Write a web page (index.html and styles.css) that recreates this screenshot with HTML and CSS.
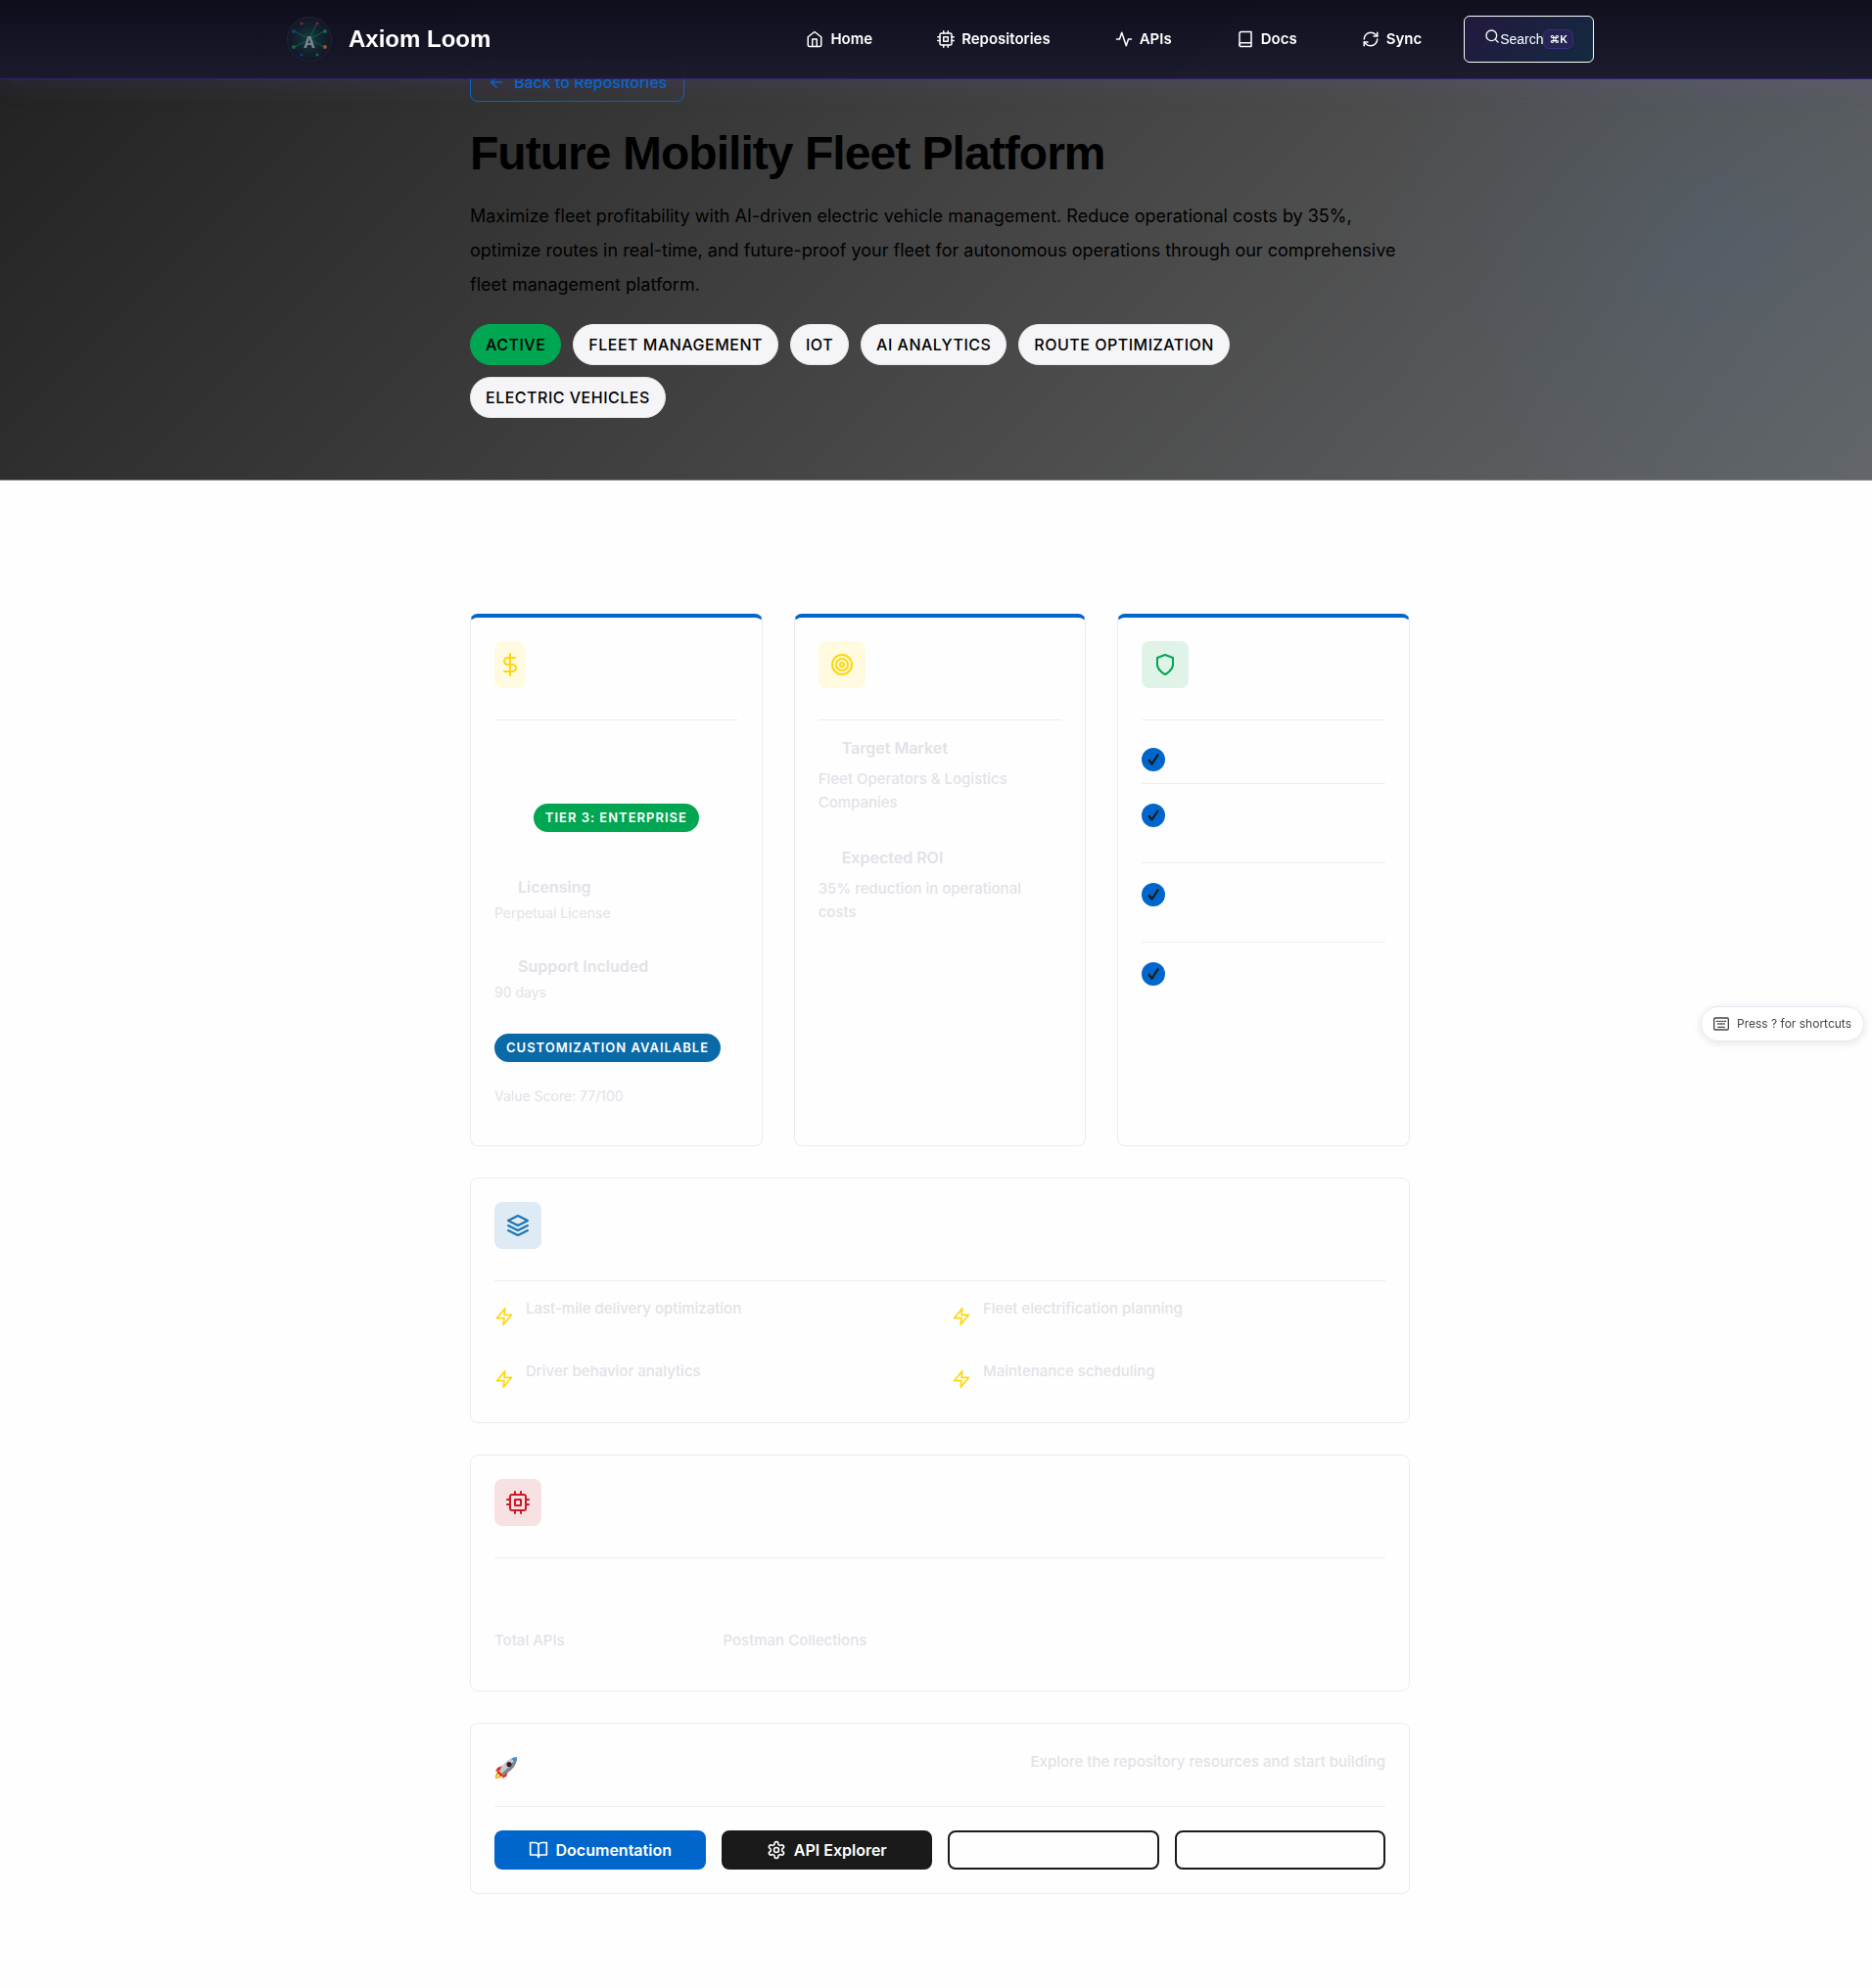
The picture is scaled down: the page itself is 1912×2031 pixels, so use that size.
FILE: index.html
```html
<!DOCTYPE html>
<html lang="en">
<head>
<meta charset="utf-8">
<title>Future Mobility Fleet Platform - Axiom Loom</title>
<link rel="stylesheet" href="styles.css">
</head>
<body>
<svg class="sprite" aria-hidden="true">
  <symbol id="cpu" viewBox="0 0 24 24"><rect x="4" y="4" width="16" height="16" rx="2"/><rect x="9" y="9" width="6" height="6"/><path d="M9 1v3M15 1v3M9 20v3M15 20v3M20 9h3M20 14h3M1 9h3M1 14h3"/></symbol>
  <symbol id="zap" viewBox="0 0 24 24"><path d="M13 2 3 14h9l-1 8 10-12h-9z"/></symbol>
  <symbol id="tick" viewBox="0 0 24 24"><path d="M6 13l4 5 8-12"/></symbol>
</svg>
<header class="topbar">
  <div class="topbar-inner">
    <a class="brand" href="#">
      <svg class="brand-mark" viewBox="0 0 48 48" aria-hidden="true">
        <defs><radialGradient id="glow"><stop offset="0" stop-color="#15403f"/><stop offset=".6" stop-color="#12222f"/><stop offset="1" stop-color="#141625"/></radialGradient></defs>
        <circle cx="24" cy="24" r="22.500" fill="url(#glow)" stroke="#24243a" stroke-width="1"/>
        <path d="M24 24 9 16M24 24 9 32M24 24l7-15M24 24l15-8M24 24l15 8" stroke="#0d5f4b" stroke-width="1"/>
        <g stroke="none">
          <circle cx="8" cy="16" r="2" fill="#123f7c"/><circle cx="40" cy="16" r="2" fill="#0f6a4d"/><circle cx="8" cy="32" r="2" fill="#0f6a4d"/><circle cx="40" cy="32" r="2" fill="#a0521f"/>
          <circle cx="16" cy="8" r="1.500" fill="#7a2345"/><circle cx="32" cy="8" r="1.500" fill="#7a2345"/><circle cx="16" cy="40" r="1.500" fill="#123f7c"/><circle cx="32" cy="40" r="1.500" fill="#0f6a4d"/>
        </g>
        <text x="24" y="33" text-anchor="middle" class="brand-letter">A</text>
      </svg>
      <span class="brand-name">Axiom Loom</span>
    </a>
    <nav class="nav">
      <a href="#"><svg class="i18" viewBox="0 0 24 24"><path d="M3 9l9-7 9 7v11a2 2 0 0 1-2 2H5a2 2 0 0 1-2-2z"/><path d="M9 22V12h6v10"/></svg>Home</a>
      <a href="#"><svg class="i18"><use href="#cpu"/></svg>Repositories</a>
      <a href="#"><svg class="i18" viewBox="0 0 24 24"><path d="M22 12h-4l-3 9L9 3l-3 9H2"/></svg>APIs</a>
      <a href="#"><svg class="i18" viewBox="0 0 24 24"><path d="M4 19.500A2.500 2.500 0 0 1 6.500 17H20"/><path d="M6.500 2H20v20H6.500A2.500 2.500 0 0 1 4 19.500v-15A2.500 2.500 0 0 1 6.500 2z"/></svg>Docs</a>
      <a href="#"><svg class="i18" viewBox="0 0 24 24"><path d="M21 3v5h-5M3 21v-5h5"/><path d="M3 12a9 9 0 0 1 9-9 9.750 9.750 0 0 1 6.740 2.740L21 8M21 12a9 9 0 0 1-9 9 9.750 9.750 0 0 1-6.740-2.740L3 16"/></svg>Sync</a>
      <button class="search" type="button"><svg class="i16" viewBox="0 0 24 24"><circle cx="11" cy="11" r="8"/><path d="M21 21l-4.350-4.350"/></svg>Search<kbd>⌘K</kbd></button>
    </nav>
  </div>
</header>

<section class="hero">
  <div class="wrap">
    <a class="back" href="#"><svg class="i18" viewBox="0 0 24 24"><path d="M19 12H5M12 19l-7-7 7-7"/></svg>Back to Repositories</a>
    <h1>Future Mobility Fleet Platform</h1>
    <p class="lead">Maximize fleet profitability with AI-driven electric vehicle management. Reduce operational costs by 35%, optimize routes in real-time, and future-proof your fleet for autonomous operations through our comprehensive fleet management platform.</p>
    <ul class="tags">
      <li class="active">Active</li><li>Fleet Management</li><li>IoT</li><li>AI Analytics</li><li>Route Optimization</li><li>Electric Vehicles</li>
    </ul>
  </div>
</section>

<main class="main">
  <div class="wrap stack">
    <div class="trio">
      <section class="card accent">
        <div class="card-head"><span class="tile yellow narrow"><svg class="i24" viewBox="0 0 24 24"><path d="M12 1v22M17 5H9.500a3.500 3.500 0 0 0 0 7h5a3.500 3.500 0 0 1 0 7H6"/></svg></span></div>
        <div class="price"><span class="badge green">Tier 3: Enterprise</span></div>
        <dl class="facts">
          <dt>Licensing</dt><dd>Perpetual License</dd>
          <dt>Support Included</dt><dd>90 days</dd>
        </dl>
        <span class="badge blue">Customization Available</span>
        <p class="score">Value Score: 77/100</p>
      </section>
      <section class="card accent">
        <div class="card-head"><span class="tile yellow"><svg class="i24" viewBox="0 0 24 24"><circle cx="12" cy="12" r="10"/><circle cx="12" cy="12" r="6"/><circle cx="12" cy="12" r="2"/></svg></span></div>
        <dl class="facts roomy">
          <dt>Target Market</dt><dd>Fleet Operators &amp; Logistics Companies</dd>
          <dt>Expected ROI</dt><dd>35% reduction in operational costs</dd>
        </dl>
      </section>
      <section class="card accent">
        <div class="card-head"><span class="tile mint"><svg class="i24" viewBox="0 0 24 24"><path d="M12 22s8-4 8-10V5l-8-3-8 3v7c0 6 8 10 8 10z"/></svg></span></div>
        <ul class="checks">
          <li><span class="dot"><svg><use href="#tick"/></svg></span></li>
          <li><span class="dot"><svg><use href="#tick"/></svg></span></li>
          <li><span class="dot"><svg><use href="#tick"/></svg></span></li>
          <li><span class="dot"><svg><use href="#tick"/></svg></span></li>
        </ul>
      </section>
    </div>

    <section class="card">
      <div class="card-head"><span class="tile sky"><svg class="i24" viewBox="0 0 24 24"><path d="M12 2 2 7l10 5 10-5zM2 17l10 5 10-5M2 12l10 5 10-5"/></svg></span></div>
      <ul class="uses">
        <li><svg class="i20"><use href="#zap"/></svg>Last-mile delivery optimization</li>
        <li><svg class="i20"><use href="#zap"/></svg>Fleet electrification planning</li>
        <li><svg class="i20"><use href="#zap"/></svg>Driver behavior analytics</li>
        <li><svg class="i20"><use href="#zap"/></svg>Maintenance scheduling</li>
      </ul>
    </section>

    <section class="card">
      <div class="card-head"><span class="tile rose"><svg class="i24"><use href="#cpu"/></svg></span></div>
      <div class="stats"><p>Total APIs</p><p>Postman Collections</p></div>
    </section>

    <section class="card">
      <div class="card-head cta-head">
        <svg class="rocket" viewBox="0 0 24 24" aria-hidden="true">
          <path d="M8 10 3 12 1 16l5-1zM14 16l-2 5-4 2 1-5z" fill="#e0301e"/>
          <path d="M5 15c-3 1-4 4-4 8 4 0 7-2 8-4z" fill="#f7941e"/><path d="M5 17c-2 1-3 3-3 5 2 0 4-1 5-3z" fill="#ffd84a"/>
          <path d="M5 16C8 8 14 2 23 1c0 9-6 15-14 18z" fill="#c3cbd3"/><path d="M7 18C12 14 18 8 23 1c0 9-6 15-14 18z" fill="#7d8791"/>
          <path d="M17 2.500C19 1.500 21 1 23 1c0 2-.5 4-1.500 6z" fill="#4a90cc"/>
          <circle cx="15" cy="8.500" r="2.600" fill="#3a1c20"/><path d="M4 15l5 5-2 1-4-4z" fill="#c3261a"/>
        </svg>
        <p>Explore the repository resources and start building</p>
      </div>
      <div class="actions">
        <button class="btn primary" type="button"><svg class="i20" viewBox="0 0 24 24"><path d="M2 3h6a4 4 0 0 1 4 4v14a3 3 0 0 0-3-3H2zM22 3h-6a4 4 0 0 0-4 4v14a3 3 0 0 1 3-3h7z"/></svg>Documentation</button>
        <button class="btn dark" type="button"><svg class="i20" viewBox="0 0 24 24"><circle cx="12" cy="12" r="3"/><path d="M12.220 2h-.440a2 2 0 0 0-2 2v.180a2 2 0 0 1-1 1.730l-.430.250a2 2 0 0 1-2 0l-.150-.080a2 2 0 0 0-2.730.730l-.220.380a2 2 0 0 0 .730 2.730l.150.100a2 2 0 0 1 1 1.720v.510a2 2 0 0 1-1 1.740l-.150.090a2 2 0 0 0-.730 2.730l.220.380a2 2 0 0 0 2.730.730l.150-.080a2 2 0 0 1 2 0l.430.250a2 2 0 0 1 1 1.730V20a2 2 0 0 0 2 2h.440a2 2 0 0 0 2-2v-.180a2 2 0 0 1 1-1.730l.430-.250a2 2 0 0 1 2 0l.150.080a2 2 0 0 0 2.730-.730l.220-.390a2 2 0 0 0-.730-2.730l-.150-.080a2 2 0 0 1-1-1.740v-.500a2 2 0 0 1 1-1.740l.150-.090a2 2 0 0 0 .730-2.730l-.220-.380a2 2 0 0 0-2.730-.730l-.150.080a2 2 0 0 1-2 0l-.430-.250a2 2 0 0 1-1-1.730V4a2 2 0 0 0-2-2z"/></svg>API Explorer</button>
        <button class="btn outline" type="button"></button>
        <button class="btn outline" type="button"></button>
      </div>
    </section>
  </div>
</main>

<button class="shortcuts" type="button"><svg class="i16" viewBox="0 0 24 24"><rect x="1" y="3" width="22" height="18" rx="2"/><path d="M5 8h2M9 8h2M13 8h2M17 8h2M7 12h2M11 12h2M15 12h2M7 17h10"/></svg>Press ? for shortcuts</button>
</body>
</html>
```
FILE: styles.css
```css
* { box-sizing: border-box; }
body {
  margin: 0;
  background: #fefefe;
  color: #e2e2e8;
  font: 500 15px/24px Inter, "Liberation Sans", sans-serif;
}
h1, p, ul, dl, dd { margin: 0; padding: 0; }
ul { list-style: none; }
a { color: inherit; text-decoration: none; }
button { font: inherit; margin: 0; }
svg { fill: none; stroke: currentColor; stroke-width: 2; stroke-linecap: round; stroke-linejoin: round; flex: none; }
.sprite { display: none; }
.i16 { width: 16px; height: 16px; }
.i18 { width: 18px; height: 18px; }
.i20 { width: 20px; height: 20px; }
.i24 { width: 24px; height: 24px; }
.wrap { max-width: 960px; margin: 0 auto; }

.topbar {
  position: fixed;
  inset: 0 0 auto;
  z-index: 10;
  padding-left: 8px;
  background: linear-gradient(180deg, rgba(13, 13, 28, .96), rgba(26, 26, 46, .96));
  border-bottom: 1px solid #35206b;
  box-shadow: 0 4px 30px rgba(139, 92, 246, .12);
}
.topbar-inner {
  max-width: 1400px;
  min-height: 80px;
  margin: 0 auto;
  padding: 0 32px;
  display: flex;
  align-items: center;
  justify-content: space-between;
}
.brand { display: flex; align-items: center; gap: 16px; color: #fff; }
.brand-mark { width: 48px; height: 48px; }
.brand-letter { font-size: 16px; font-weight: 700; fill: #7d858d; stroke: none; }
.brand-name { font: 700 24px/32px "Liberation Sans", sans-serif; }
.nav { display: flex; align-items: center; gap: 32px; color: #fff; font-weight: 600; }
.nav a { display: flex; align-items: center; gap: 7px; padding: 8px 17px; }
.search {
  display: flex;
  align-items: center;
  height: 48px;
  margin-left: -6px;
  padding: 0 20px;
  color: #fff;
  font: 400 14px/20px "Liberation Sans", sans-serif;
  background: linear-gradient(135deg, #22193f, #142a40);
  border: 1px solid #fff;
  border-radius: 6px;
}
.search .i16 { margin-bottom: 6px; }
.search kbd {
  padding: 0 5px;
  font: 600 11px/18px Inter, "DejaVu Sans", sans-serif;
  background: #252453;
  border: 1px solid #37307a;
  border-radius: 6px;
}

.hero {
  padding: 64px 0 63px 8px;
  color: #000;
  background:
    radial-gradient(circle at 91% 50%, rgba(60, 120, 180, .1), transparent 340px),
    linear-gradient(135deg, #202020 0%, #4a4a4a 60%, #636669 100%);
  border-bottom: 1px solid #8a8a8c;
}
.back {
  display: flex;
  align-items: center;
  gap: 9px;
  width: fit-content;
  height: 40px;
  padding: 0 17px;
  color: #0066cc;
  font-size: 16px;
  border: 1px solid #0066cc;
  border-radius: 8px;
}
h1 { margin-top: 24px; font: 700 48px/57px "Liberation Sans", sans-serif; letter-spacing: -0.02em; }
.lead { margin-top: 18px; font-size: 18px; line-height: 35px; font-weight: 400; }
.tags { display: flex; flex-wrap: wrap; gap: 12px; margin-top: 23px; }
.tags li {
  padding: 8px 15px;
  font-size: 16px;
  letter-spacing: 0.5px;
  text-transform: uppercase;
  background: #f5f5f7;
  border: 1px solid #e5e5ea;
  border-radius: 21px;
}
.tags .active { background: #00a651; border-color: #00a651; }

.main { padding: 136px 0 96px 8px; }
.stack { display: flex; flex-direction: column; gap: 32px; }
.trio { display: grid; grid-template-columns: repeat(3, 1fr); gap: 32px; }
.card { padding: 24px; border: 1px solid #e9ecf4; border-radius: 8px; }
.card.accent { border-top: 4px solid #0066cc; min-height: 544px; }
.card-head { display: flex; align-items: flex-start; min-height: 81px; margin-bottom: 16px; border-bottom: 1px solid #e9edf4; }
.tile { display: grid; place-items: center; width: 48px; height: 48px; border-radius: 8px; }
.tile.narrow { width: 31px; }
.yellow { color: #ffd60a; background: #fffae0; }
.mint { color: #00a651; background: #dff3e8; }
.sky { color: #1a73b5; background: #deebf4; }
.rose { color: #cc1a26; background: #f8e1e3; }
.price { display: flex; justify-content: center; padding: 69px 0 44px; }
.badge {
  display: inline-block;
  padding: 4px 12px;
  color: #fff;
  font-size: 13px;
  line-height: 21px;
  font-weight: 600;
  letter-spacing: 1px;
  text-transform: uppercase;
  border-radius: 15px;
}
.green { background: #00a651; }
.blue { background: #0a6aa8; }
.facts dt { padding-left: 24px; font-size: 16px; font-weight: 600; }
.facts dd { margin: 4px 0 31px; font-size: 14px; line-height: 22px; font-weight: 400; }
.facts.roomy dd { margin: 8px 0 32px; font-size: 15px; line-height: 24px; font-weight: 500; }
.score { margin-top: 23px; font-size: 14px; line-height: 24px; font-weight: 400; }
.checks li { min-height: 81px; padding-top: 20px; border-bottom: 1px solid #e9edf4; }
.checks li:first-child { min-height: 49px; padding-top: 12px; }
.checks li:last-child { border-bottom: 0; }
.dot { display: grid; place-items: center; width: 24px; height: 24px; color: #1a1a1a; background: #0066cc; border-radius: 50%; }
.dot svg { width: 18px; height: 18px; stroke-width: 3; }
.uses { display: grid; grid-template-columns: 1fr 1fr; gap: 24px; }
.uses li { display: flex; gap: 12px; min-height: 40px; }
.uses svg { margin-top: 10px; color: #ffd60a; }
.stats { display: grid; grid-template-columns: repeat(4, 1fr); gap: 24px; padding: 56px 0 15px; }
.cta-head { justify-content: space-between; min-height: 61px; margin-bottom: 24px; padding-top: 3px; }
.rocket { width: 24px; height: 24px; margin-top: 6px; stroke: none; }
.actions { display: grid; grid-template-columns: repeat(4, 1fr); gap: 16px; }
.btn {
  display: flex;
  align-items: center;
  justify-content: center;
  gap: 8px;
  height: 40px;
  color: #fff;
  font-size: 16px;
  font-weight: 600;
  border: 2px solid #1a1a1a;
  border-radius: 8px;
}
.primary { background: #0066cc; border-color: #0066cc; }
.dark { background: #1a1a1a; }
.outline { background: transparent; }

.shortcuts {
  position: fixed;
  top: 1028px;
  right: 8px;
  display: flex;
  align-items: center;
  gap: 8px;
  height: 36px;
  padding: 0 12px;
  color: #444;
  font-size: 12px;
  font-weight: 400;
  background: #fff;
  border: 1px solid #e8e8f4;
  border-radius: 18px;
  box-shadow: 0 2px 8px rgba(0, 0, 0, .1);
}
```
